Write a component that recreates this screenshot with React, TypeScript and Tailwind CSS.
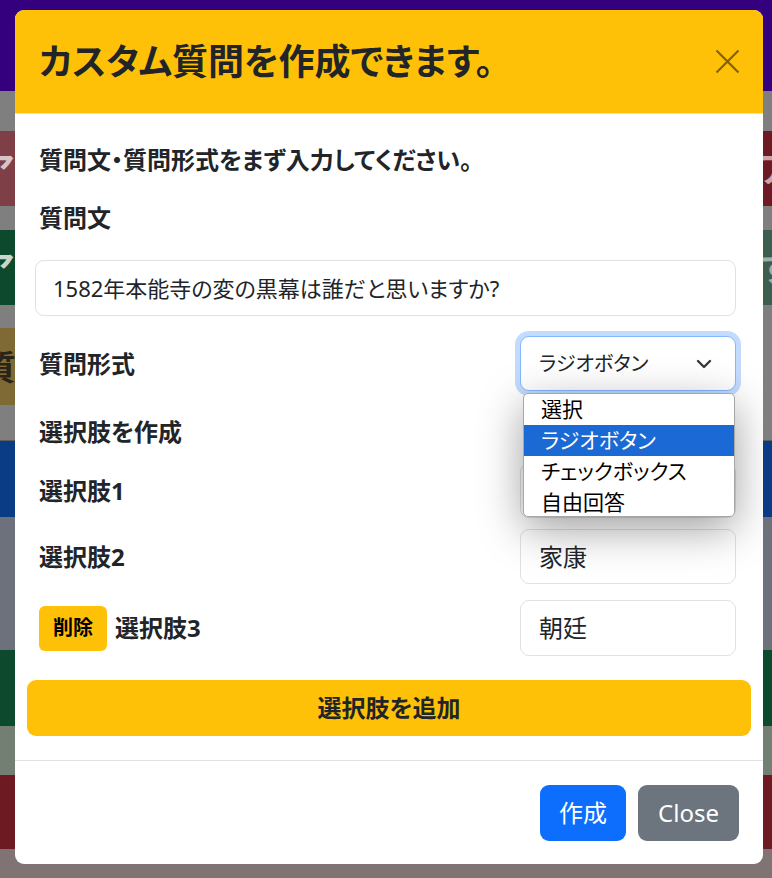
import { ChevronDown } from "lucide-react"

const bgRows = [
  { h: "h-[91px]", l: "bg-[#35007d]", r: "bg-[#35007d]" },
  { h: "h-[40px]", l: "bg-[#7f7f7f]", r: "bg-[#7f7f7f]" },
  { h: "h-[75px]", l: "bg-[#7f3f46]", r: "bg-[#6e1a22]", lt: "ア", lc: "text-[#d8c4c7]", rt: "ア", rc: "text-[#c9a6aa]" },
  { h: "h-[24px]", l: "bg-[#7f7f7f]", r: "bg-[#7f7f7f]" },
  { h: "h-[75px]", l: "bg-[#0d4a2d]", r: "bg-[#3d5e4e]", lt: "ア", lc: "text-[#c8d6cf]", rt: "す", rc: "text-[#9fb0a8]" },
  { h: "h-[23px]", l: "bg-[#7f7f7f]", r: "bg-[#7f7f7f]" },
  { h: "h-[77px]", l: "bg-[#7f6a36]", r: "bg-[#7f7f7f]", lt: "質", lc: "text-[#2a2418]" },
  { h: "h-[35px]", l: "bg-[#7f7f7f]", r: "bg-[#7f7f7f]" },
  { h: "h-[1px]", l: "bg-[#5e5e5e]", r: "bg-[#5e5e5e]" },
  { h: "h-[76px]", l: "bg-[#0a3b85]", r: "bg-[#0a3b85]" },
  { h: "h-[133px]", l: "bg-[#6c717b]", r: "bg-[#6c717b]" },
  { h: "h-[76px]", l: "bg-[#0d4a2d]", r: "bg-[#0d4a2d]" },
  { h: "h-[49px]", l: "bg-[#737f72]", r: "bg-[#737f72]" },
  { h: "h-[74px]", l: "bg-[#6e1a22]", r: "bg-[#6e1a22]" },
  { h: "h-[29px]", l: "bg-[#7f7473]", r: "bg-[#7f7473]" },
]

const options = ["選択", "ラジオボタン", "チェックボックス", "自由回答"]

function Background() {
  return (
    <div className="flex flex-col w-full">
      {bgRows.map((row, i) => (
        <div key={i} className={`flex ${row.h} overflow-hidden`}>
          <div className={`flex-1 flex items-center overflow-hidden ${row.l}`}>
            {row.lt && (
              <span className={`ml-[-18px] text-[34px] font-bold leading-none ${row.lc}`}>{row.lt}</span>
            )}
          </div>
          <div className={`flex-1 flex items-center justify-end overflow-hidden ${row.r}`}>
            {row.rt && (
              <span className={`mr-[-20px] text-[34px] font-bold leading-none ${row.rc}`}>{row.rt}</span>
            )}
          </div>
        </div>
      ))}
    </div>
  )
}

function Label({ children }: { children: React.ReactNode }) {
  return <span className="text-[24px] font-bold text-[#212529] leading-none">{children}</span>
}

function TextBox({ value }: { value: string }) {
  return (
    <div className="w-[216px] h-full border border-[#dee2e6] rounded-[9px] flex items-center px-[18px] text-[24px] text-[#212529] bg-white">
      {value}
    </div>
  )
}

export default function App() {
  return (
    <div className="relative w-[772px] h-[878px] overflow-hidden font-['Noto_Sans','Noto_Sans_CJK_JP',sans-serif] [font-feature-settings:'palt']">
      <Background />

      <div className="absolute left-[15px] top-[10px] w-[748px] h-[854px] bg-white rounded-[9px] overflow-hidden flex flex-col">
        <div className="h-[104px] shrink-0 bg-[#ffc107] border-b border-[#dee2e6] flex items-center justify-between pl-[24px] pr-[23px]">
          <h1 className="text-[36px] font-bold text-[#212529] leading-none">カスタム質問を作成できます。</h1>
          <svg width="25" height="25" viewBox="0 0 25 25">
            <path d="M1.5 1.5 L23.5 23.5 M23.5 1.5 L1.5 23.5" stroke="#80620a" strokeWidth="2.2" />
          </svg>
        </div>

        <div className="relative flex flex-col pl-[20px] pr-[27px]">
          <div className="mt-[24px] h-[44px] flex items-center pl-[4px]">
            <Label>質問文・質問形式をまず入力してください。</Label>
          </div>
          <div className="mt-[14px] h-[44px] flex items-center pl-[4px]">
            <Label>質問文</Label>
          </div>
          <div className="mt-[20px] h-[56px] border border-[#dee2e6] rounded-[9px] flex items-center px-[17px] text-[22px] text-[#212529]">
            1582年本能寺の変の黒幕は誰だと思いますか?
          </div>

          <div className="mt-[20px] h-[55px] flex items-center justify-between pl-[4px]">
            <Label>質問形式</Label>
            <div className="w-[216px] h-full border border-[#86b7fe] rounded-[9px] shadow-[0_0_0_5px_rgba(13,110,253,0.25)] flex items-center justify-between pl-[18px] pr-[19px] text-[20px] text-[#212529] bg-white">
              <span>ラジオボタン</span>
              <ChevronDown className="w-[24px] h-[24px] text-[#343a40]" strokeWidth={2.4} />
            </div>
          </div>

          <div className="mt-[19px] h-[44px] flex items-center pl-[4px]">
            <Label>選択肢を作成</Label>
          </div>

          <div className="mt-[9px] h-[55px] flex items-center justify-between pl-[4px]">
            <Label>選択肢1</Label>
            <TextBox value="" />
          </div>
          <div className="mt-[11px] h-[55px] flex items-center justify-between pl-[4px]">
            <Label>選択肢2</Label>
            <TextBox value="家康" />
          </div>
          <div className="mt-[16px] h-[56px] flex items-center justify-between pl-[4px]">
            <div className="flex items-center gap-[8px]">
              <button className="w-[68px] h-[45px] bg-[#ffc107] rounded-[6px] text-[20px] font-bold text-black leading-none">
                削除
              </button>
              <Label>選択肢3</Label>
            </div>
            <TextBox value="朝廷" />
          </div>

          <div className="absolute left-[508px] top-[279px] w-[212px] h-[124px] bg-white border border-[#a7a7a7] rounded-[5px] overflow-hidden shadow-[0_12px_44px_rgba(0,0,0,0.38)]">
            {options.map((o, i) => (
              <div
                key={o}
                className={`h-[31px] shrink-0 flex items-center pl-[17px] text-[21px] leading-none ${
                  i === 1 ? "bg-[#1b69d4] text-white" : "text-black"
                }`}
              >
                {o}
              </div>
            ))}
          </div>
        </div>

        <button className="mt-[24px] mx-[12px] h-[56px] shrink-0 bg-[#ffc107] rounded-[9px] text-[24px] font-bold text-[#212529]">
          選択肢を追加
        </button>

        <div className="mt-[24px] border-t border-[#dee2e6] pt-[24px] pr-[24px] flex justify-end gap-[12px]">
          <button className="w-[86px] h-[56px] bg-[#0d6efd] rounded-[9px] text-[24px] text-white">作成</button>
          <button className="w-[101px] h-[56px] bg-[#6c757d] rounded-[9px] text-[24px] text-white">Close</button>
        </div>
      </div>
    </div>
  )
}
